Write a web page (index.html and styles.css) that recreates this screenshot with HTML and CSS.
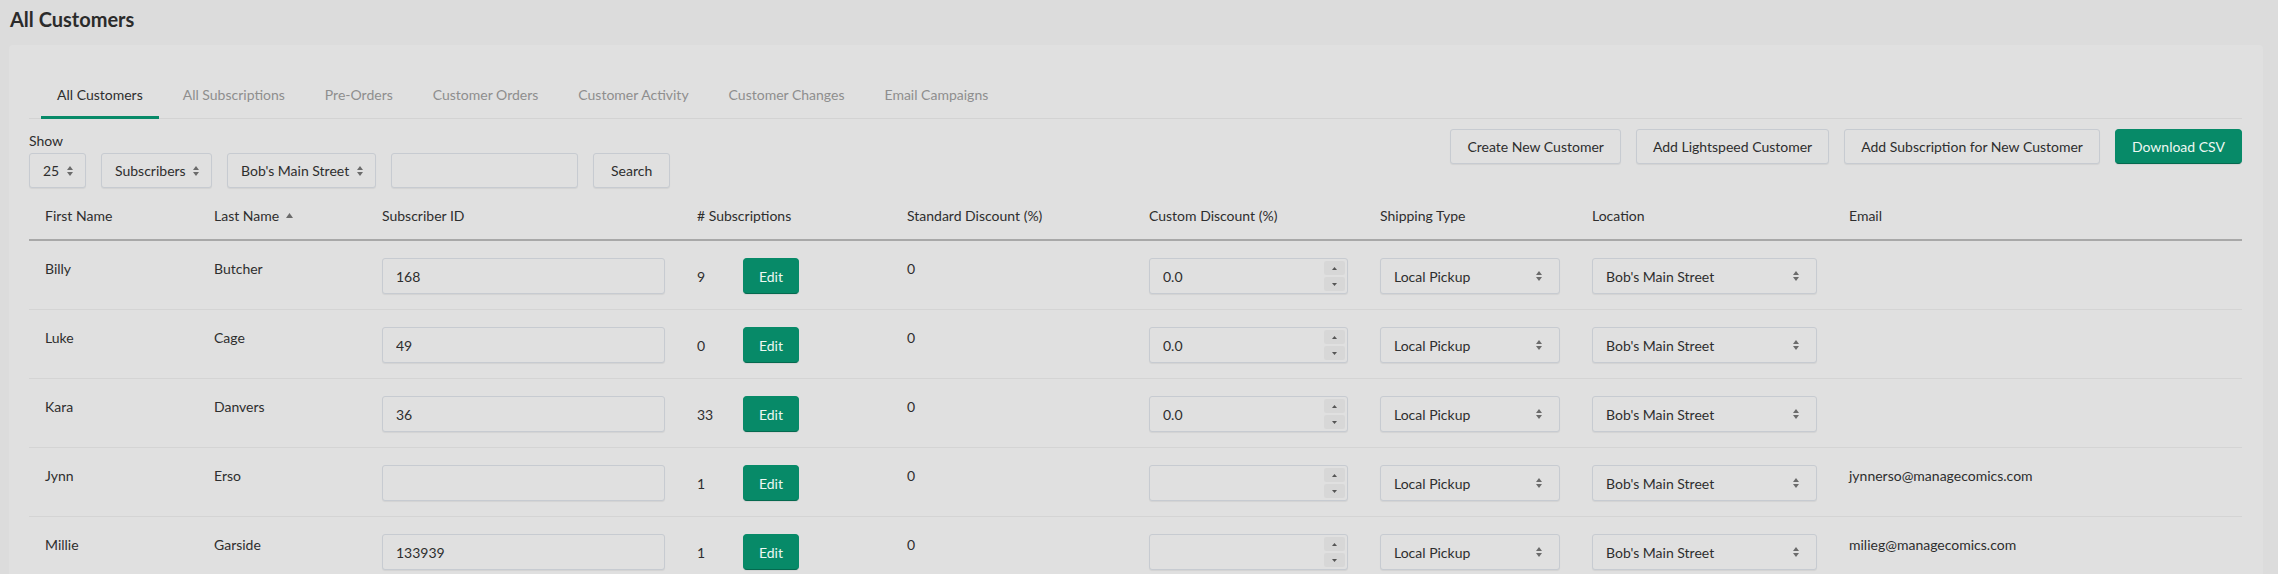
FILE: index.html
```html
<!DOCTYPE html>
<html>

<head>
    <title>All Customers</title>
    <link rel="stylesheet" href="styles.css">
</head>

<body>
    <h1 class="page-title">All Customers</h1>

    <div class="panel">
        <ul class="tabs">
            <li class="tab active">All Customers</li>
            <li class="tab">All Subscriptions</li>
            <li class="tab">Pre-Orders</li>
            <li class="tab">Customer Orders</li>
            <li class="tab">Customer Activity</li>
            <li class="tab">Customer Changes</li>
            <li class="tab">Email Campaigns</li>
        </ul>

        <div class="toolbar">
            <div class="filters">
                <label class="show-label">Show</label>
                <div class="filter-row">
                    <div class="select-box">
                        <select><option>25</option></select>
                        <svg class="updown" width="6" height="10" viewBox="0 0 6 10"><path d="M0 4L3 0L6 4Z M0 6L3 10L6 6Z"/></svg>
                    </div>
                    <div class="select-box">
                        <select><option>Subscribers</option></select>
                        <svg class="updown" width="6" height="10" viewBox="0 0 6 10"><path d="M0 4L3 0L6 4Z M0 6L3 10L6 6Z"/></svg>
                    </div>
                    <div class="select-box">
                        <select><option>Bob's Main Street</option></select>
                        <svg class="updown" width="6" height="10" viewBox="0 0 6 10"><path d="M0 4L3 0L6 4Z M0 6L3 10L6 6Z"/></svg>
                    </div>
                    <input type="text" class="field search-field">
                    <button class="btn btn-search">Search</button>
                </div>
            </div>
            <div class="actions">
                <button class="btn">Create New Customer</button>
                <button class="btn">Add Lightspeed Customer</button>
                <button class="btn">Add Subscription for New Customer</button>
                <button class="btn btn-green">Download CSV</button>
            </div>
        </div>

        <table class="customers">
            <colgroup>
                <col style="width: 169px">
                <col style="width: 168px">
                <col style="width: 315px">
                <col style="width: 210px">
                <col style="width: 242px">
                <col style="width: 231px">
                <col style="width: 212px">
                <col style="width: 257px">
                <col>
            </colgroup>
            <thead>
                <tr>
                    <th>First Name</th>
                    <th>Last Name <svg class="sort" width="7" height="5" viewBox="0 0 7 5"><path d="M0 5L3.5 0L7 5Z"/></svg></th>
                    <th>Subscriber ID</th>
                    <th># Subscriptions</th>
                    <th>Standard Discount (%)</th>
                    <th>Custom Discount (%)</th>
                    <th>Shipping Type</th>
                    <th>Location</th>
                    <th>Email</th>
                </tr>
            </thead>
            <tbody id="rows"></tbody>
        </table>
    </div>

    <script>
        const customers = [
            { first: 'Billy', last: 'Butcher', id: '168', subs: 9, discount: '0.0', email: '' },
            { first: 'Luke', last: 'Cage', id: '49', subs: 0, discount: '0.0', email: '' },
            { first: 'Kara', last: 'Danvers', id: '36', subs: 33, discount: '0.0', email: '' },
            { first: 'Jynn', last: 'Erso', id: '', subs: 1, discount: '', email: 'jynnerso@managecomics.com' },
            { first: 'Millie', last: 'Garside', id: '133939', subs: 1, discount: '', email: 'milieg@managecomics.com' }
        ];

        const arrows = '<svg class="updown" width="6" height="10" viewBox="0 0 6 10"><path d="M0 4L3 0L6 4Z M0 6L3 10L6 6Z"/></svg>';

        const tbody = document.getElementById('rows');
        customers.forEach(c => {
            const tr = document.createElement('tr');
            tr.innerHTML = `
                <td>${c.first}</td>
                <td>${c.last}</td>
                <td><input type="text" class="field full" value="${c.id}"></td>
                <td>
                    <div class="sub-cell">
                        <span class="sub-count">${c.subs}</span>
                        <button class="btn btn-green btn-edit">Edit</button>
                    </div>
                </td>
                <td>0</td>
                <td>
                    <div class="field number-box">
                        <input type="text" value="${c.discount}">
                        <div class="spin">
                            <span><svg width="5" height="3" viewBox="0 0 5 3"><path d="M0 3L2.5 0L5 3Z"/></svg></span>
                            <span><svg width="5" height="3" viewBox="0 0 5 3"><path d="M0 0L2.5 3L5 0Z"/></svg></span>
                        </div>
                    </div>
                </td>
                <td><div class="select-box full"><select><option>Local Pickup</option></select>${arrows}</div></td>
                <td><div class="select-box full"><select><option>Bob's Main Street</option></select>${arrows}</div></td>
                <td>${c.email}</td>`;
            tbody.appendChild(tr);
        });
    </script>
</body>

</html>
```

FILE: styles.css
```css
body {
    margin: 0;
    background-color: #dcdcdc;
    font-family: "Lato", "Open Sans", sans-serif;
    font-size: 14px;
    color: #2e2e2e;
}

.page-title {
    margin: 0;
    padding: 6px 10px 12px;
    font-size: 20px;
    line-height: 27px;
    font-weight: 700;
    color: #2b2b2b;
}

.panel {
    margin: 0 15px 0 9px;
    padding: 27px 21px 20px 20px;
    background-color: #e0e0e0;
    border-radius: 4px;
}

.tabs {
    list-style: none;
    margin: 0;
    padding: 0 12px;
    display: flex;
    gap: 8px;
    border-bottom: 1px solid #d3d3d3;
}

.tab {
    padding: 12px 16px 11px;
    line-height: 21px;
    color: #8e8e8e;
    border-bottom: 3px solid transparent;
    margin-bottom: -1px;
}

.tab.active {
    color: #2e2e2e;
    border-bottom-color: #078a68;
}

.toolbar {
    display: flex;
    justify-content: space-between;
    align-items: flex-start;
    padding-top: 10px;
}

.show-label {
    display: block;
    line-height: 21px;
    margin: 1px 0 2px;
}

.filter-row {
    display: flex;
    gap: 15px;
}

.actions {
    display: flex;
    gap: 15px;
}

.field,
.select-box,
.btn {
    box-sizing: border-box;
    height: 35px;
    border: 1px solid #c7cbd1;
    border-radius: 3px;
    background-color: #e0e0e0;
    color: #2e2e2e;
    font-family: inherit;
    font-size: 14px;
    box-shadow: 0 1px 1px rgba(0, 0, 0, 0.06);
}

.field {
    padding: 0 13px;
}

.field:focus,
select:focus {
    outline: none;
}

.search-field {
    width: 187px;
}

.btn {
    padding: 0 16px;
    cursor: pointer;
}

.btn-search {
    padding: 0 17px;
}

.btn-green {
    background-color: #078a68;
    border-color: #078a68;
    border-bottom-color: #05694f;
    color: #eef8f3;
    border-radius: 4px;
}

.select-box {
    display: flex;
    align-items: center;
    padding: 0 12px 0 0;
}

.select-box select {
    appearance: none;
    -webkit-appearance: none;
    border: none;
    background: transparent;
    font-family: inherit;
    font-size: 14px;
    color: #2e2e2e;
    height: 100%;
    padding: 0 7px 0 13px;
    flex: 1;
}

.updown {
    fill: #6b6b6b;
    flex-shrink: 0;
}

.customers {
    width: 100%;
    border-collapse: collapse;
    table-layout: fixed;
}

.customers th {
    text-align: left;
    font-weight: 400;
    padding: 17px 16px 13px;
    line-height: 21px;
    border-bottom: 2px solid #a8a8a8;
    white-space: nowrap;
}

.sort {
    fill: #6b6b6b;
    margin-left: 3px;
    vertical-align: 3px;
}

.customers td {
    padding: 17px 16px 15px;
    line-height: 21px;
    vertical-align: top;
    border-bottom: 1px solid #d4d4d4;
}

.customers .field,
.customers .select-box,
.customers .btn {
    height: 36px;
}

.full {
    width: 100%;
}

.select-box.full {
    padding-right: 17px;
}

.sub-cell {
    display: flex;
    align-items: center;
}

.sub-count {
    width: 46px;
}

.btn-edit {
    width: 56px;
    padding: 0;
}

.number-box {
    display: flex;
    align-items: center;
    padding: 0 2px 0 13px;
    width: 100%;
}

.number-box input {
    flex: 1;
    min-width: 0;
    border: none;
    background: transparent;
    font-family: inherit;
    font-size: 14px;
    color: #2e2e2e;
    padding: 0;
}

.spin {
    display: flex;
    flex-direction: column;
    gap: 2px;
}

.spin span {
    width: 21px;
    height: 14px;
    background-color: #d7d7d7;
    border-radius: 2px;
    display: flex;
    align-items: center;
    justify-content: center;
    fill: #555;
}
```
